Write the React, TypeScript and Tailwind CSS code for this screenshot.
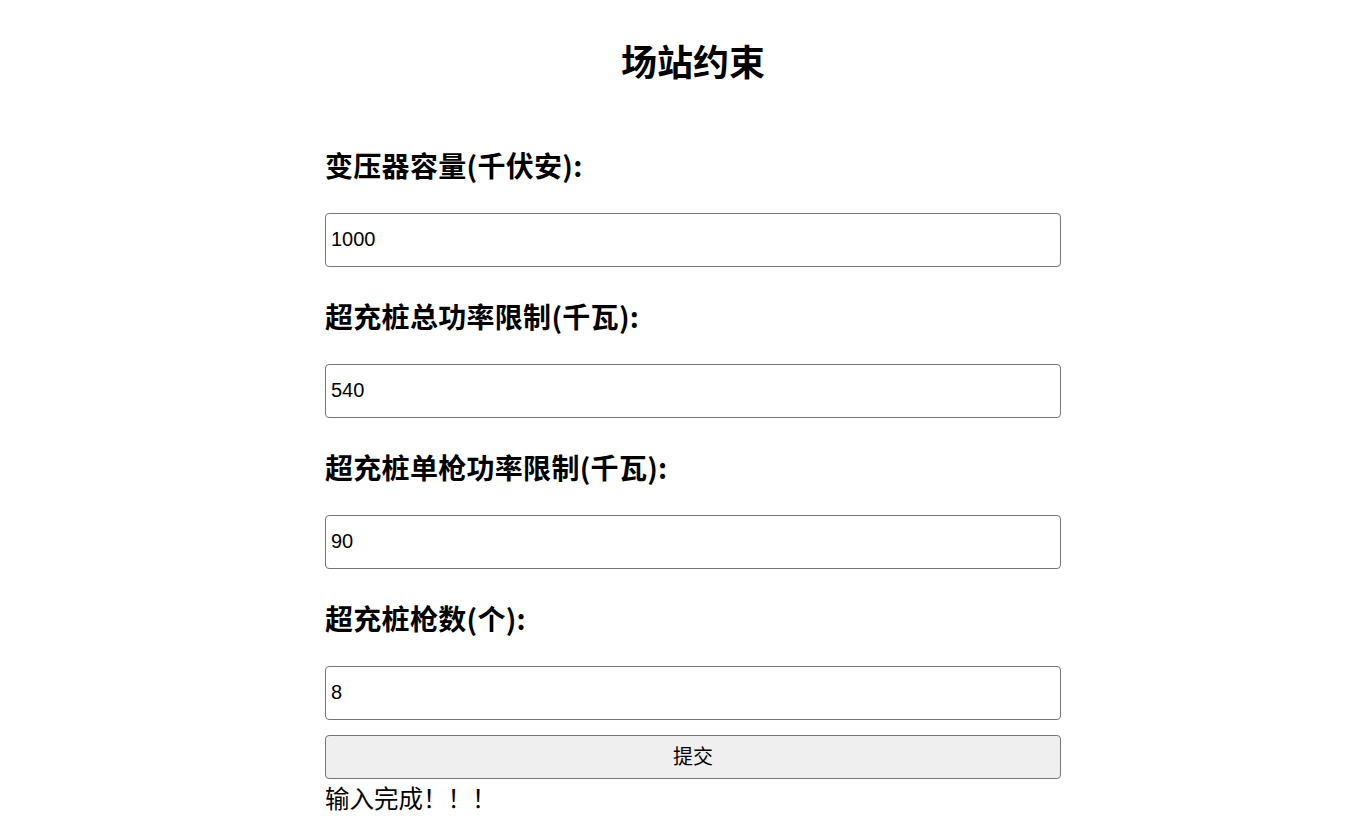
const FIELDS = [
  { label: "变压器容量(千伏安):", value: "1000" },
  { label: "超充桩总功率限制(千瓦):", value: "540" },
  { label: "超充桩单枪功率限制(千瓦):", value: "90" },
  { label: "超充桩枪数(个):", value: "8" },
];

export default function App() {
  return (
    <div className="min-h-[825px] bg-white text-black">
      <div className="ml-[325px] w-[736px]">
        <h1 className="pt-[36px] text-center text-[36px] leading-[48px] font-bold font-['Noto_Sans_CJK_SC',sans-serif]">
          场站约束
        </h1>
        <form
          className="mt-[61px]"
          onSubmit={(e) => e.preventDefault()}
        >
          {FIELDS.map((f, i) => (
            <div key={i} className={i === 0 ? "" : "mt-[29px]"}>
              <label className="block h-[40px] text-[28px] leading-[40px] font-bold tracking-[0.3px] font-['Noto_Sans_CJK_SC',sans-serif]">
                {f.label}
              </label>
              <input
                type="text"
                defaultValue={f.value}
                className="mt-[28px] block h-[54px] w-full rounded-[4px] border border-[#767676] bg-white pl-[5px] pb-[2px] text-[20px] font-['Liberation_Sans','Noto_Sans_CJK_SC',sans-serif] outline-none"
              />
            </div>
          ))}
          <button
            type="submit"
            className="mt-[15px] block h-[44px] w-full rounded-[4px] border border-[#767676] bg-[#efefef] text-[20px] font-['Liberation_Sans','Noto_Sans_CJK_SC',sans-serif]"
          >
            提交
          </button>
        </form>
        <p className="mt-[3px] text-[24.5px] leading-[32px] font-['Noto_Sans_CJK_SC',sans-serif]">
          输入完成！！！
        </p>
      </div>
    </div>
  );
}
